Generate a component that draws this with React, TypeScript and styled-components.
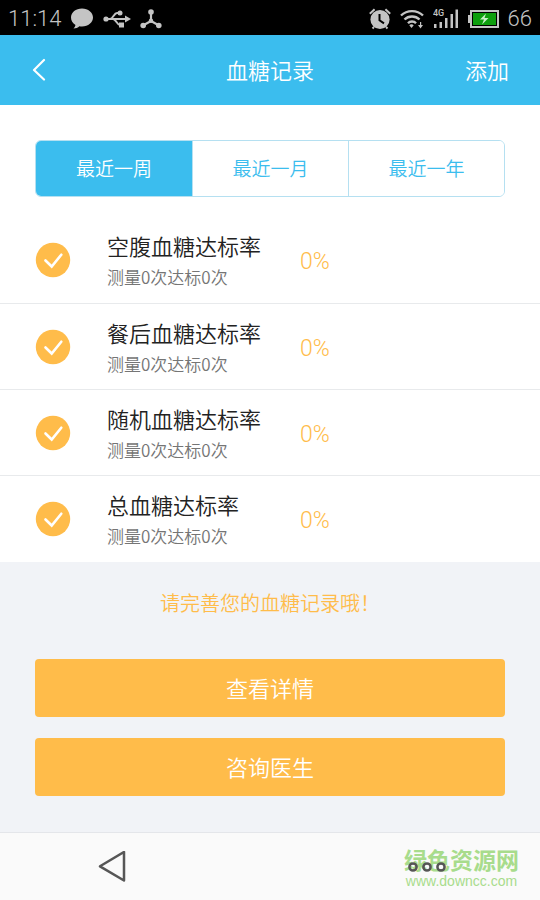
import React, { useState } from "react";
import styled, { createGlobalStyle } from "styled-components";

const blue = "#3bbdee";
const orange = "#ffbc4a";
const cjk = '"Noto Sans CJK SC", sans-serif';

const GlobalStyle = createGlobalStyle`
  * { box-sizing: border-box; }
  body { margin: 0; background: #f1f3f7; font-family: Roboto, ${cjk}; font-weight: 350; }
  button { font: inherit; border: 0; padding: 0; margin: 0; cursor: pointer; background: none; }
  h1, h2, p, ul { margin: 0; padding: 0; font-weight: inherit; }
  svg { display: block; flex: none; }
`;

const Page = styled.div`
  min-height: 100vh;
  display: flex;
  flex-direction: column;
`;

const StatusBar = styled.div`
  height: 35px;
  padding: 2px 8px 0;
  display: flex;
  align-items: center;
  justify-content: space-between;
  background: #000;
  color: #c4c4c4;
  font-size: 22px;
  font-weight: 300;
`;

const StatusGroup = styled.div`
  display: flex;
  align-items: center;
  gap: 9px;
`;

const Header = styled.header`
  height: 70px;
  display: grid;
  grid-template-columns: 1fr auto 1fr;
  align-items: center;
  padding: 0 31px 2px;
  background: ${blue};
  color: #fff;
  font-family: ${cjk};
  font-size: 22px;
`;

const Title = styled.h1`
  font-size: 22px;
`;

const HeaderButton = styled.button<{ $end?: boolean }>`
  justify-self: ${(p) => (p.$end ? "end" : "start")};
  color: #fff;
  line-height: 32px;
`;

const Records = styled.main`
  background: #fff;
  padding: 35px 0 1px;
`;

const Tabs = styled.div`
  display: grid;
  grid-template-columns: repeat(3, 1fr);
  height: 57px;
  margin: 0 35px 20px;
  border: 1px solid #b5e0f1;
  border-radius: 6px;
  overflow: hidden;
`;

const Tab = styled.button<{ $active: boolean }>`
  padding-bottom: 2px;
  font-family: ${cjk};
  font-size: 19px;
  color: ${(p) => (p.$active ? "#fff" : blue)};
  background: ${(p) => (p.$active ? blue : "#fff")};

  & + & {
    border-left: 1px solid #b5e0f1;
  }
`;

const RecordList = styled.ul`
  list-style: none;
`;

const Record = styled.li`
  display: flex;
  align-items: center;
  height: 86px;
  padding: 0 35px;

  & + & {
    border-top: 1px solid #e8eaec;
  }
`;

const RecordText = styled.div`
  display: grid;
  gap: 2px;
  width: 193px;
  margin-left: 36px;
  font-family: ${cjk};
`;

const RecordName = styled.h2`
  font-size: 22px;
  line-height: 32px;
  color: #222;
`;

const RecordDetail = styled.p`
  font-size: 17px;
  line-height: 28px;
  color: #757575;
`;

const Rate = styled.span`
  padding-top: 3px;
  font-size: 23px;
  font-weight: 300;
  color: ${orange};
`;

const Hint = styled.p`
  padding: 26px 35px 41px;
  text-align: center;
  font-family: ${cjk};
  font-size: 20px;
  line-height: 30px;
  color: ${orange};
`;

const Actions = styled.div`
  display: grid;
  gap: 21px;
  padding: 0 35px 35px;
`;

const ActionButton = styled.button`
  height: 58px;
  padding-bottom: 2px;
  border-radius: 4px;
  background: ${orange};
  color: #fff;
  font-family: ${cjk};
  font-size: 22px;
`;

const NavBar = styled.nav`
  position: relative;
  height: 68px;
  margin-top: auto;
  padding: 0 94px 0 98px;
  display: flex;
  align-items: center;
  justify-content: space-between;
  background: #fafafa;
  border-top: 1px solid #e4e6ea;
`;

const NavButton = styled.button`
  position: relative;
  z-index: 1;
`;

const Watermark = styled.div`
  position: absolute;
  right: 21px;
  top: 10px;
  text-align: center;
  color: #a8dc8c;
`;

const WatermarkName = styled.div`
  font-family: ${cjk};
  font-weight: 700;
  font-size: 23px;
  line-height: 32px;
`;

const WatermarkSite = styled.div`
  font-family: "Liberation Sans", sans-serif;
  font-weight: 400;
  font-size: 14px;
  line-height: 12px;
`;

const BubbleIcon = () => (
  <svg width="24" height="22" viewBox="0 0 24 22" fill="#c4c4c4" aria-hidden="true">
    <path d="M12 0.5C5.800.5 1 4.400 1 9.600c0 3.200 1.700 5.800 4.500 7.400-.3 1.500-1 2.700-2 3.600 2.400-.1 4.400-.9 5.900-2.300.8.2 1.700.2 2.600.2 6.200 0 11-3.900 11-8.900S18.200.5 12 .5z" />
  </svg>
);

const UsbIcon = () => (
  <svg width="28" height="20" viewBox="0 0 28 20" fill="none" stroke="#c4c4c4" strokeWidth="2" aria-hidden="true">
    <path d="M3 10h20M7 10c3 0 4-6 7-6h2M10 10c3 0 4 6 7 6h1" />
    <circle cx="3" cy="10" r="2.600" fill="#c4c4c4" stroke="none" />
    <circle cx="17" cy="4" r="2.500" fill="#c4c4c4" stroke="none" />
    <rect x="16" y="13.500" width="5" height="5" fill="#c4c4c4" stroke="none" />
    <path d="M22 6.500l6 3.500-6 3.500z" fill="#c4c4c4" stroke="none" />
  </svg>
);

const TriadIcon = () => (
  <svg width="22" height="20" viewBox="0 0 22 20" fill="#c4c4c4" aria-hidden="true">
    <path d="M11 3v9M11 12l-8 4.500M11 12l8 4.500" stroke="#c4c4c4" strokeWidth="2.200" />
    <circle cx="11" cy="3" r="2.800" />
    <circle cx="3.200" cy="16.500" r="2.800" />
    <circle cx="18.800" cy="16.500" r="2.800" />
    <circle cx="11" cy="11.800" r="2.200" />
  </svg>
);

const AlarmIcon = () => (
  <svg width="22" height="22" viewBox="0 0 22 22" fill="none" aria-hidden="true">
    <circle cx="11" cy="11.500" r="9.600" fill="#c4c4c4" />
    <path d="M.8 5.800L5.600 1.200M21.200 5.800l-4.800-4.600M5 19l-1.500 1.500M17 19l1.500 1.500" stroke="#c4c4c4" strokeWidth="2" />
    <path d="M10.500 6v6.300l4.500 3" stroke="#000" strokeWidth="2" />
  </svg>
);

const WifiIcon = () => (
  <svg width="24" height="20" viewBox="0 0 24 20" fill="none" stroke="#c4c4c4" strokeWidth="2.400" aria-hidden="true">
    <path d="M1 6.500c6-5.800 16-5.800 22 0M4.500 10.500c4-4 11-4 15 0M8 14.200c2-2.200 6-2.200 8 0" />
    <path d="M9.300 16.300c1.400-1.300 3-1.300 4.400 0L11.500 19z" fill="#c4c4c4" stroke="none" />
    <path d="M18 16h5l-2.500 3.500zM20 13h1.200v3H20z" fill="#c4c4c4" stroke="none" />
  </svg>
);

const SignalIcon = () => (
  <svg width="26" height="21" viewBox="0 0 26 21" fill="#c4c4c4" aria-hidden="true">
    <text x="0" y="8" fontFamily="Roboto, sans-serif" fontWeight="500" fontSize="9">4G</text>
    <path d="M1 16h2.500v4H1zM6.500 14H9v6H6.500zM12 10h2.500v10H12zM17.500 6H20v14h-2.500zM22.500 1.500H25V20h-2.500z" />
  </svg>
);

const BatteryIcon = () => (
  <svg width="31" height="18" viewBox="0 0 31 18" aria-hidden="true">
    <path d="M0 5h2v8H0z" fill="#c4c4c4" />
    <rect x="3" y="1" width="27" height="16" fill="#000" stroke="#c4c4c4" strokeWidth="2" />
    <rect x="5" y="3" width="23" height="12" fill="#0d9e0d" />
    <path d="M18 3.500l-6 6h4l-2 5 6.500-6.500h-4z" fill="#c8f0c8" />
  </svg>
);

const BackIcon = () => (
  <svg width="16" height="24" viewBox="0 0 16 24" fill="none" stroke="#fff" strokeWidth="2.200" strokeLinecap="round" strokeLinejoin="round" aria-hidden="true">
    <path d="M13 3L3 13l10 9.500" />
  </svg>
);

const CheckIcon = () => (
  <svg width="36" height="36" viewBox="0 0 36 36" aria-hidden="true">
    <circle cx="18" cy="18" r="17.200" fill={orange} />
    <path d="M10.500 18.500l6.200 6L26.300 12.700" fill="none" stroke="#fff" strokeWidth="2.600" strokeLinecap="round" />
  </svg>
);

const NavBackIcon = () => (
  <svg width="28" height="32" viewBox="0 0 28 32" fill="none" stroke="#565656" strokeWidth="2.500" strokeLinejoin="round" aria-hidden="true">
    <path d="M26 1v28.500L2 15.300z" />
  </svg>
);

const NavMoreIcon = () => (
  <svg width="38" height="12" viewBox="0 0 38 12" fill="none" stroke="#565656" strokeWidth="2.500" aria-hidden="true">
    <circle cx="5" cy="6" r="3.600" />
    <circle cx="19" cy="6" r="3.600" />
    <circle cx="33" cy="6" r="3.600" />
  </svg>
);

const periods = ["最近一周", "最近一月", "最近一年"];

const records = [
  { name: "空腹血糖达标率", detail: "测量0次达标0次", rate: "0%" },
  { name: "餐后血糖达标率", detail: "测量0次达标0次", rate: "0%" },
  { name: "随机血糖达标率", detail: "测量0次达标0次", rate: "0%" },
  { name: "总血糖达标率", detail: "测量0次达标0次", rate: "0%" },
];

export default function App() {
  const [period, setPeriod] = useState(periods[0]);

  return (
    <Page>
      <GlobalStyle />
      <StatusBar>
        <StatusGroup>
          <span>11:14</span>
          <BubbleIcon />
          <UsbIcon />
          <TriadIcon />
        </StatusGroup>
        <StatusGroup>
          <AlarmIcon />
          <WifiIcon />
          <SignalIcon />
          <BatteryIcon />
          <span>66</span>
        </StatusGroup>
      </StatusBar>
      <Header>
        <HeaderButton aria-label="返回">
          <BackIcon />
        </HeaderButton>
        <Title>血糖记录</Title>
        <HeaderButton $end>添加</HeaderButton>
      </Header>
      <Records>
        <Tabs role="tablist">
          {periods.map((label) => (
            <Tab
              key={label}
              role="tab"
              aria-selected={label === period}
              $active={label === period}
              onClick={() => setPeriod(label)}
            >
              {label}
            </Tab>
          ))}
        </Tabs>
        <RecordList>
          {records.map((record) => (
            <Record key={record.name}>
              <CheckIcon />
              <RecordText>
                <RecordName>{record.name}</RecordName>
                <RecordDetail>{record.detail}</RecordDetail>
              </RecordText>
              <Rate>{record.rate}</Rate>
            </Record>
          ))}
        </RecordList>
      </Records>
      <Hint>请完善您的血糖记录哦！</Hint>
      <Actions>
        <ActionButton>查看详情</ActionButton>
        <ActionButton>咨询医生</ActionButton>
      </Actions>
      <NavBar>
        <NavButton aria-label="后退">
          <NavBackIcon />
        </NavButton>
        <Watermark>
          <WatermarkName>绿色资源网</WatermarkName>
          <WatermarkSite>www.downcc.com</WatermarkSite>
        </Watermark>
        <NavButton aria-label="更多">
          <NavMoreIcon />
        </NavButton>
      </NavBar>
    </Page>
  );
}
